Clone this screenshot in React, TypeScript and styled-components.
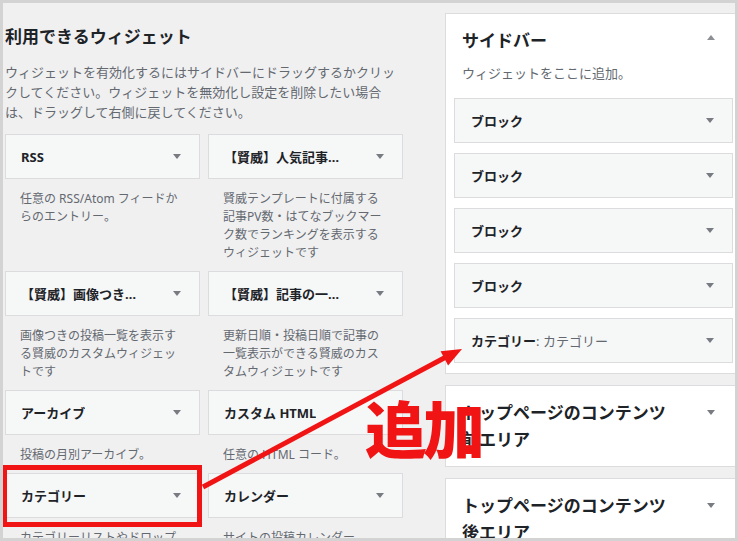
import styled, { createGlobalStyle } from 'styled-components'

const GlobalStyle = createGlobalStyle`
  body {
    margin: 0;
    background: #ffffff;
    font-family: "Noto Sans", "Noto Sans CJK JP", sans-serif;
    color: #1d2327;
  }
  * {
    box-sizing: border-box;
  }
`

const Frame = styled.div`
  position: relative;
  display: flex;
  width: 738px;
  height: 541px;
  border: 3px solid #d3d3d3;
  background: #f0f0f1;
  overflow: hidden;
`

const Available = styled.section`
  flex: 0 0 399px;
  padding-left: 2px;
`

const Heading = styled.h2`
  margin: 20px 0 0;
  font-size: 17px;
  line-height: 27px;
  font-weight: 700;
  color: #1d2327;
`

const Intro = styled.p`
  margin: 12px 0 0;
  font-size: 13px;
  line-height: 20px;
  color: #646970;
`

const WidgetGrid = styled.div`
  display: grid;
  grid-template-columns: 195px 195px;
  column-gap: 8px;
  margin-top: 12px;
`

const WidgetCell = styled.div`
  display: flex;
  flex-direction: column;
`

const WidgetTop = styled.div`
  display: flex;
  align-items: center;
  height: 45px;
  padding: 0 18px 0 15px;
  border: 1px solid #dcdcde;
  background: #f6f7f7;
`

const WidgetTitle = styled.h3`
  margin: 0;
  max-width: 124px;
  font-size: 13px;
  line-height: 18px;
  font-weight: 700;
  white-space: nowrap;
  overflow: hidden;
  text-overflow: ellipsis;
  color: #1d2327;
`

const WidgetDesc = styled.p`
  margin: 0;
  padding: 11px 15px 9px;
  font-size: 12px;
  line-height: 18px;
  color: #646970;
`

const Sidebars = styled.section`
  flex: 0 0 297px;
  margin-left: 42px;
  padding-top: 10px;
  display: flex;
  flex-direction: column;
  gap: 11px;
`

const Panel = styled.div`
  background: #ffffff;
  border: 1px solid #dcdcde;
`

const PanelHeader = styled.div`
  display: flex;
  align-items: flex-start;
  padding: 13px 26px 13px 16px;
`

const PanelTitle = styled.h2`
  margin: 0;
  max-width: 212px;
  font-size: 17px;
  line-height: 27px;
  font-weight: 700;
  color: #1d2327;
`

const PanelNote = styled.p`
  margin: -3px 0 0;
  padding: 0 16px;
  font-size: 13px;
  line-height: 18px;
  color: #646970;
`

const PanelList = styled.div`
  display: flex;
  flex-direction: column;
  gap: 10px;
  padding: 16px 8px 10px;
`

const PlacedWidget = styled.div`
  display: flex;
  align-items: center;
  height: 45px;
  padding: 0 18px 0 16px;
  border: 1px solid #dcdcde;
  background: #f6f7f7;
  font-size: 13px;
  font-weight: 700;
  color: #1d2327;
`

const InTitle = styled.span`
  font-weight: 400;
  color: #646970;
`

const CaretSvg = styled.svg<{ $up?: boolean; $top?: number }>`
  flex: 0 0 auto;
  margin-left: auto;
  margin-top: ${(p) => (p.$top ? `${p.$top}px` : '0')};
  width: 8px;
  height: 5px;
  fill: ${(p) => (p.$up ? '#8c8f94' : '#787c82')};
  transform: ${(p) => (p.$up ? 'rotate(180deg)' : 'none')};
`

const Annotation = styled.svg`
  position: absolute;
  top: -3px;
  left: -3px;
  width: 738px;
  height: 541px;
  pointer-events: none;
`

const AddLabel = styled.div`
  position: absolute;
  left: 362px;
  top: 393px;
  font-family: "Noto Sans CJK JP", sans-serif;
  font-size: 62px;
  line-height: 1;
  font-weight: 900;
  letter-spacing: -4px;
  color: #f01414;
`

function Caret({ up, top }: { up?: boolean; top?: number }) {
  return (
    <CaretSvg viewBox="0 0 8 5" $up={up} $top={top}>
      <polygon points="0,0 8,0 4,5" />
    </CaretSvg>
  )
}

const widgets = [
  { title: 'RSS', desc: '任意の RSS/Atom フィードからのエントリー。' },
  {
    title: '【賢威】人気記事ランキング',
    desc: '賢威テンプレートに付属する記事PV数・はてなブックマーク数でランキングを表示するウィジェットです',
  },
  {
    title: '【賢威】画像つき記事一覧',
    desc: '画像つきの投稿一覧を表示する賢威のカスタムウィジェットです',
  },
  {
    title: '【賢威】記事の一覧表示',
    desc: '更新日順・投稿日順で記事の一覧表示ができる賢威のカスタムウィジェットです',
  },
  { title: 'アーカイブ', desc: '投稿の月別アーカイブ。' },
  { title: 'カスタム HTML', desc: '任意の HTML コード。' },
  { title: 'カテゴリー', desc: 'カテゴリーリストやドロップダウン。' },
  { title: 'カレンダー', desc: 'サイトの投稿カレンダー。' },
]

const placed = ['ブロック', 'ブロック', 'ブロック', 'ブロック']

export default function App() {
  return (
    <>
      <GlobalStyle />
      <Frame>
        <Available>
          <Heading>利用できるウィジェット</Heading>
          <Intro>
            ウィジェットを有効化するにはサイドバーにドラッグするかクリックしてください。ウィジェットを無効化し設定を削除したい場合は、ドラッグして右側に戻してください。
          </Intro>
          <WidgetGrid>
            {widgets.map((w, index) => (
              <WidgetCell key={index}>
                <WidgetTop>
                  <WidgetTitle>{w.title}</WidgetTitle>
                  <Caret />
                </WidgetTop>
                <WidgetDesc>{w.desc}</WidgetDesc>
              </WidgetCell>
            ))}
          </WidgetGrid>
        </Available>

        <Sidebars>
          <Panel>
            <PanelHeader>
              <PanelTitle>サイドバー</PanelTitle>
              <Caret up top={8} />
            </PanelHeader>
            <PanelNote>ウィジェットをここに追加。</PanelNote>
            <PanelList>
              {placed.map((name, index) => (
                <PlacedWidget key={index}>
                  {name}
                  <Caret />
                </PlacedWidget>
              ))}
              <PlacedWidget>
                カテゴリー<InTitle>: カテゴリー</InTitle>
                <Caret />
              </PlacedWidget>
            </PanelList>
          </Panel>
          <Panel>
            <PanelHeader>
              <PanelTitle>トップページのコンテンツ前エリア</PanelTitle>
              <Caret top={11} />
            </PanelHeader>
          </Panel>
          <Panel>
            <PanelHeader>
              <PanelTitle>トップページのコンテンツ後エリア</PanelTitle>
              <Caret top={11} />
            </PanelHeader>
          </Panel>
        </Sidebars>

        <Annotation viewBox="0 0 738 541">
          <rect x="4.5" y="467.5" width="195" height="57" fill="none" stroke="#f01414" strokeWidth="5" />
          <line x1="203" y1="487" x2="446" y2="357" stroke="#f01414" strokeWidth="5" />
          <polygon points="462,349 448.1,365.5 440.6,351.3" fill="#f01414" />
        </Annotation>
        <AddLabel>追加</AddLabel>
      </Frame>
    </>
  )
}
